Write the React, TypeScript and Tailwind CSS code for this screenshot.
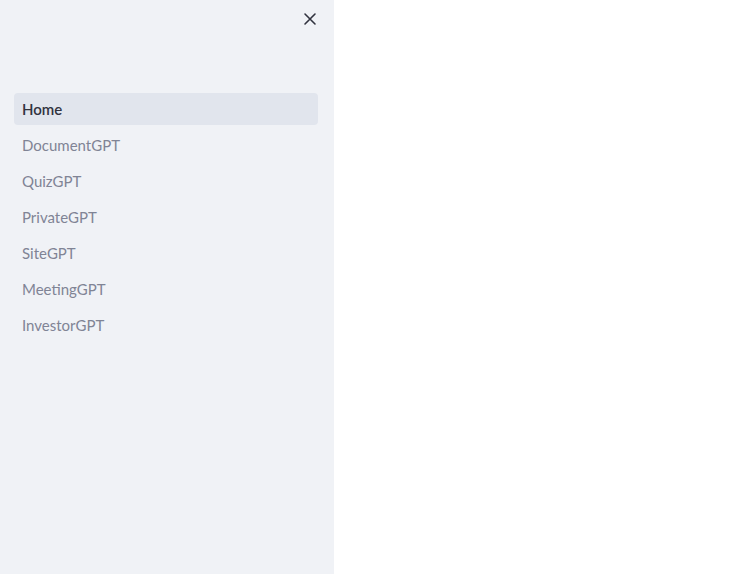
import React from "react";

const items = ["DocumentGPT", "QuizGPT", "PrivateGPT", "SiteGPT", "MeetingGPT", "InvestorGPT"];

export default function App() {
  return (
    <div className="flex h-[574px] w-[734px] bg-white" style={{ fontFamily: "Lato, 'Noto Sans', sans-serif" }}>
      <aside className="flex h-full w-[334px] flex-col bg-[#f0f2f6]">
        <div className="flex h-[93px] justify-end pr-[17px] pt-[12px]">
          <svg width="14" height="14" viewBox="0 0 14 14">
            <path d="M2 2 L12 12 M12 2 L2 12" stroke="#31333f" strokeWidth="1.6" strokeLinecap="round" />
          </svg>
        </div>
        <nav className="flex flex-col gap-[4px] pl-[14px] pr-[16px]">
          <div className="flex h-[32px] items-center rounded-[4px] bg-[#e1e5ed] px-[8px] text-[15px] font-semibold text-[#31333f]">
            Home
          </div>
          {items.map((t) => (
            <div key={t} className="flex h-[32px] items-center px-[8px] text-[15px] text-[#808495]">
              {t}
            </div>
          ))}
        </nav>
      </aside>
      <main className="flex-1 bg-white" />
    </div>
  );
}
